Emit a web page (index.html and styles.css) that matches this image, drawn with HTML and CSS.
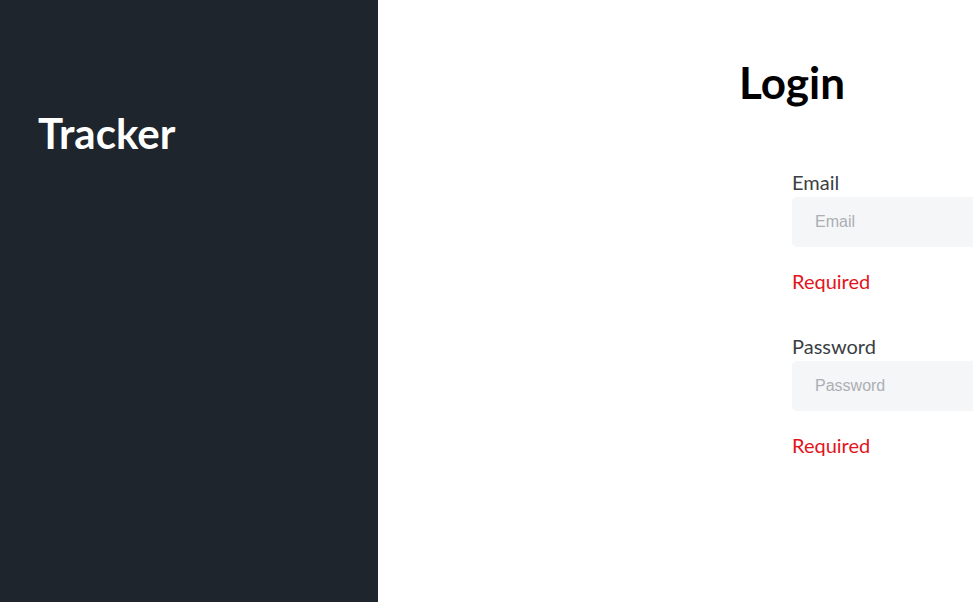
FILE: index.html
```html
<!DOCTYPE html>
<html lang="en">
<head>
<meta charset="utf-8">
<title>Tracker - Login</title>
<link rel="stylesheet" href="styles.css">
</head>
<body>
<div class="layout">
  <aside class="sidebar">
    <h1 class="brand">Tracker</h1>
  </aside>
  <main class="main">
    <div class="content">
      <h1 class="title">Login</h1>
      <form class="form">
        <div class="field">
          <label class="label" for="email">Email</label>
          <input class="input" id="email" type="email" placeholder="Email">
          <div class="error">Required</div>
        </div>
        <div class="field">
          <label class="label" for="password">Password</label>
          <input class="input" id="password" type="password" placeholder="Password">
          <div class="error">Required</div>
        </div>
      </form>
    </div>
  </main>
</div>
</body>
</html>
```
FILE: styles.css
```css
* { box-sizing: border-box; }
html, body {
  margin: 0;
  height: 100%;
  overflow: hidden;
}
body {
  font-family: Lato, "Open Sans", sans-serif;
  background: #ffffff;
}
.layout {
  display: flex;
  height: 100vh;
}
.sidebar {
  flex: 0 0 378px;
  background: #1e252c;
  padding: 108px 38px 0;
}
.brand {
  margin: 0;
  color: #ffffff;
  font-size: 42px;
  font-weight: 700;
  line-height: 1.2;
}
.main {
  flex: 1;
  min-width: 0;
  overflow: hidden;
  padding: 56px 0 0 361px;
}
.title {
  margin: 0;
  font-size: 44px;
  font-weight: 700;
  line-height: 1.2;
  color: #000000;
}
.form {
  margin: 58px 0 0 53px;
  width: 420px;
  display: flex;
  flex-direction: column;
  gap: 35px;
}
.field {
  display: flex;
  flex-direction: column;
}
.label {
  font-size: 20px;
  line-height: 30px;
  color: #3b3f44;
}
.input {
  height: 50px;
  border: none;
  border-radius: 5px;
  background: #f5f6f8;
  padding: 0 23px;
  font-family: "Liberation Sans", Arial, sans-serif;
  font-size: 16px;
  outline: none;
}
.input::placeholder {
  color: #abaeb2;
}
.error {
  margin-top: 19px;
  font-size: 20px;
  line-height: 30px;
  color: #e3141b;
}
```
